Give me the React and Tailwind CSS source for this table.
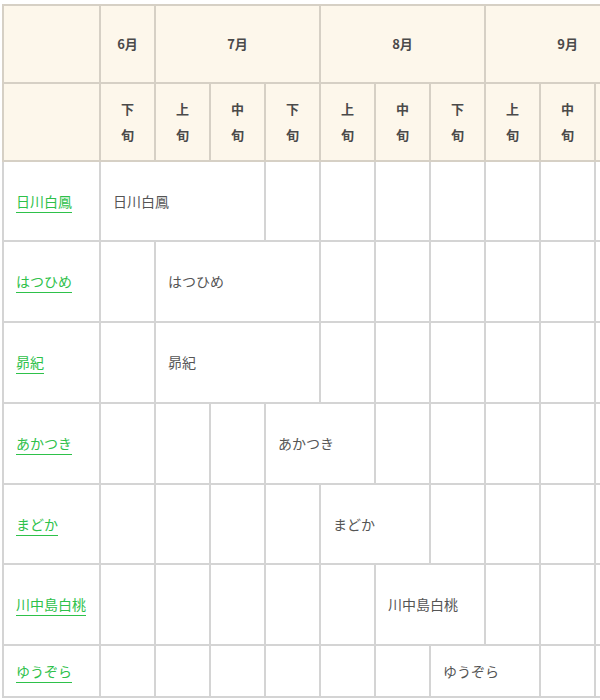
import React from "react";

const subs = [
  "下", "上", "中", "下", "上", "中", "下", "上", "中", "下",
];

// start = index of first sub column (0 = 6月下旬), span = number of columns
const rows = [
  { name: "日川白鳳", start: 0, span: 3, h: "h-[80px]" },
  { name: "はつひめ", start: 1, span: 3, h: "h-[81px]" },
  { name: "昴紀", start: 1, span: 3, h: "h-[81px]" },
  { name: "あかつき", start: 3, span: 2, h: "h-[81px]" },
  { name: "まどか", start: 4, span: 2, h: "h-[80px]" },
  { name: "川中島白桃", start: 5, span: 2, h: "h-[81px]" },
  { name: "ゆうぞら", start: 6, span: 2, h: "h-[52px]" },
];

const TOTAL = 10;

const Row = ({ row }) => {
  const cells = [];
  for (let i = 0; i < row.start; i++) {
    cells.push(<td key={"e" + i} className="border-2 border-[#d4d4d4]"></td>);
  }
  cells.push(
    <td
      key="bar"
      colSpan={row.span}
      className="border-2 border-[#d4d4d4] px-3 text-left text-[14px] text-[#555555]"
    >
      {row.name}
    </td>
  );
  for (let i = row.start + row.span; i < TOTAL; i++) {
    cells.push(<td key={"a" + i} className="border-2 border-[#d4d4d4]"></td>);
  }
  return (
    <tr className={row.h}>
      <td className="border-2 border-[#d4d4d4] px-3 text-left text-[14px]">
        <a href="#" className="text-[#2ec14a] underline underline-offset-[5px] decoration-1">
          {row.name}
        </a>
      </td>
      {cells}
    </tr>
  );
};

const App = () => {
  return (
    <div className="w-[600px] h-[700px] overflow-hidden bg-white pl-[2px] pt-[4px] font-['Noto_Sans_CJK_JP','Noto_Sans',sans-serif]">
      <table className="border-collapse table-fixed w-[647px]">
        <colgroup>
          <col className="w-[97px]" />
          {subs.map((_, i) => (
            <col key={i} className="w-[55px]" />
          ))}
        </colgroup>
        <thead>
          {/* month row */}
          <tr className="h-[78px] bg-[#fdf7eb] text-[13px] font-bold text-[#4a4a4a]">
            <th className="border-2 border-[#d6d0c5]"></th>
            <th className="border-2 border-[#d6d0c5]">6月</th>
            <th colSpan={3} className="border-2 border-[#d6d0c5]">7月</th>
            <th colSpan={3} className="border-2 border-[#d6d0c5]">8月</th>
            <th colSpan={3} className="border-2 border-[#d6d0c5]">9月</th>
          </tr>
          {/* 旬 row */}
          <tr className="h-[78px] bg-[#fdf7eb] text-[13px] font-bold text-[#4a4a4a] leading-[26px]">
            <th className="border-2 border-[#d6d0c5]"></th>
            {subs.map((s, i) => (
              <th key={i} className="border-2 border-[#d6d0c5]">
                {s}
                <br />
                旬
              </th>
            ))}
          </tr>
        </thead>
        <tbody>
          {rows.map((r) => (
            <Row key={r.name} row={r} />
          ))}
        </tbody>
      </table>
    </div>
  );
};

export default App;
